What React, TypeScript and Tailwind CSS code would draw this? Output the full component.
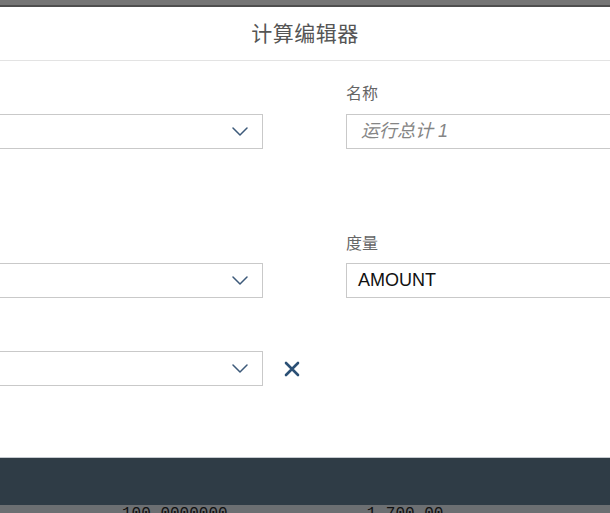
import React from 'react';

const Chevron = () => (
    <svg width="16" height="9" viewBox="0 0 16 9" fill="none" className="shrink-0">
        <polyline points="1,1 8,8 15,1" stroke="#3d5a7a" strokeWidth="1.5" strokeLinecap="round" strokeLinejoin="round" />
    </svg>
);

const Dropdown = () => (
    <div className="h-[35px] w-[263px] border border-l-0 border-[#c9c9c9] bg-white flex items-center justify-end pr-[14px]">
        <Chevron />
    </div>
);

const App = () => {
    return (
        <div className="w-[610px] h-[513px] overflow-hidden flex flex-col bg-white font-['Liberation_Sans','Noto_Sans_CJK_SC',sans-serif]">
            {/* backdrop strip at top */}
            <div className="h-[7px] shrink-0 bg-[#757575] border-b-2 border-[#4e4e4e]" />

            {/* Dialog header */}
            <div className="h-[54px] shrink-0 border-b border-[#e3e3e3] flex items-center justify-center">
                <span className="text-[21px] text-[#555] tracking-[0.5px]">计算编辑器</span>
            </div>

            {/* Body */}
            <div className="flex-1 pt-[23px]">
                <div className="flex gap-[83px]">
                    <div className="w-[263px] shrink-0 pt-[30px]">
                        <Dropdown />
                    </div>
                    <div className="w-[300px] shrink-0">
                        <div className="h-[20px] mb-[10px] text-[16px] leading-[20px] text-[#666]">名称</div>
                        <div className="h-[35px] border border-[#c9c9c9] flex items-center pl-[14px]">
                            <span className="italic text-[18px] text-[#858585]">运行总计 1</span>
                        </div>
                    </div>
                </div>

                <div className="flex gap-[83px] mt-[85px]">
                    <div className="w-[263px] shrink-0 pt-[29px]">
                        <Dropdown />
                    </div>
                    <div className="w-[300px] shrink-0">
                        <div className="h-[20px] mb-[9px] text-[16px] leading-[20px] text-[#666]">度量</div>
                        <div className="h-[35px] border border-[#c9c9c9] flex items-center pl-[11px]">
                            <span className="text-[18px] text-[#111]">AMOUNT</span>
                        </div>
                    </div>
                </div>

                <div className="flex items-center mt-[53px]">
                    <Dropdown />
                    <button className="ml-[21px] w-[16px] h-[16px] flex items-center justify-center">
                        <svg width="16" height="16" viewBox="0 0 16 16" fill="none">
                            <path d="M2 2 L14 14 M14 2 L2 14" stroke="#2b5075" strokeWidth="2.6" strokeLinecap="round" />
                        </svg>
                    </button>
                </div>
            </div>

            {/* Footer */}
            <div className="h-[48px] shrink-0 bg-[#2f3c46] border-t border-[#c5cacf]" />

            {/* table behind, cut off */}
            <div className="h-[8px] shrink-0 bg-[#6c6f72] overflow-hidden">
                <div className="flex pt-[1px] text-[16px] leading-[16px] text-[#111] font-['Liberation_Mono',monospace]">
                    <span className="ml-[122px]">100.0000000</span>
                    <span className="ml-[139px]">1,700.00</span>
                </div>
            </div>
        </div>
    );
};

export default App;
